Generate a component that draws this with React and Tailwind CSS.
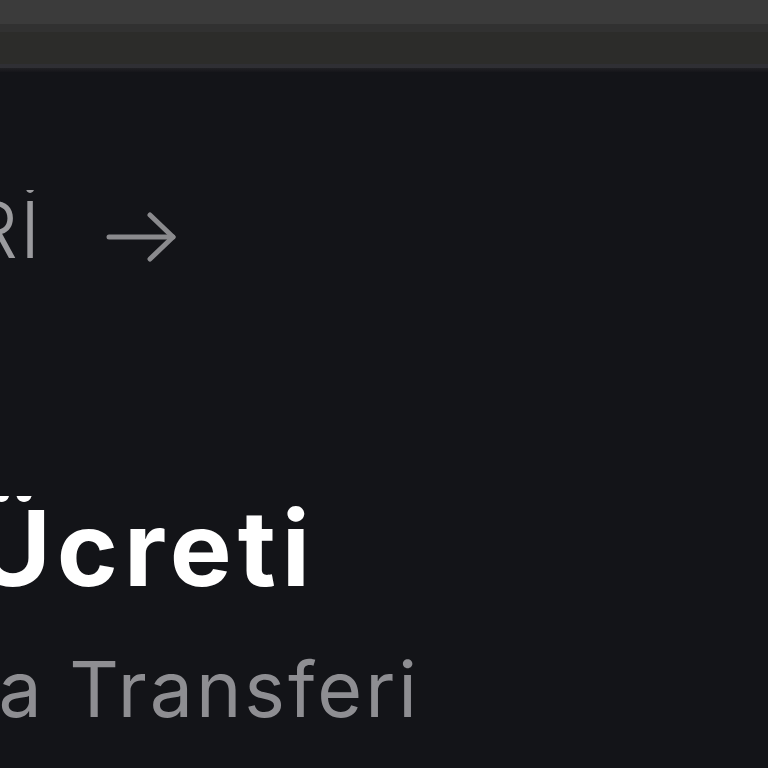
import React from 'react';

const Arrow = () => (
  <svg width="74" height="54" viewBox="0 0 74 54" fill="none" className="shrink-0">
    <path d="M4 27h64" stroke="#8a8a8d" strokeWidth="5" strokeLinecap="round" />
    <path d="M45 5l23 22-23 22" stroke="#8a8a8d" strokeWidth="5" strokeLinecap="round" strokeLinejoin="round" />
  </svg>
);

export default function App() {
  return (
    <div className="w-[768px] h-[768px] overflow-hidden bg-[#131418] font-['Inter',sans-serif]">
      {/* browser chrome */}
      <div className="h-6 bg-[#3b3b3b]" />
      <div className="h-2 bg-[#313131]" />
      <div className="h-8 bg-[#2c2c2a]" />
      <div className="h-1 bg-[#2f2f34]" />
      <div className="h-1 bg-gradient-to-b from-[#202024] to-[#16161a]" />

      <div className="flex flex-col">
        {/* section link */}
        <div className="flex items-center mt-[112px] h-[90px]">
          <div className="w-[42px] flex justify-end overflow-hidden shrink-0">
            <span className="whitespace-nowrap text-[79px] font-light leading-none text-[#9b9b9e] tracking-[0.02em]">ÜCRETLERİ</span>
          </div>
          <div className="ml-[63px] mt-[16px]">
            <Arrow />
          </div>
        </div>

        {/* title */}
        <div className="w-[316px] flex justify-end overflow-hidden mt-[222px]">
          <h1 className="whitespace-nowrap text-[104px] font-bold leading-none text-white tracking-[6px]">Havale Ücreti</h1>
        </div>

        {/* subtitle */}
        <div className="w-[420px] flex justify-end overflow-hidden mt-[51px]">
          <p className="whitespace-nowrap text-[77px] font-normal leading-none text-[#8e8e92] tracking-[3px]">Para Transferi</p>
        </div>
      </div>
    </div>
  );
}
